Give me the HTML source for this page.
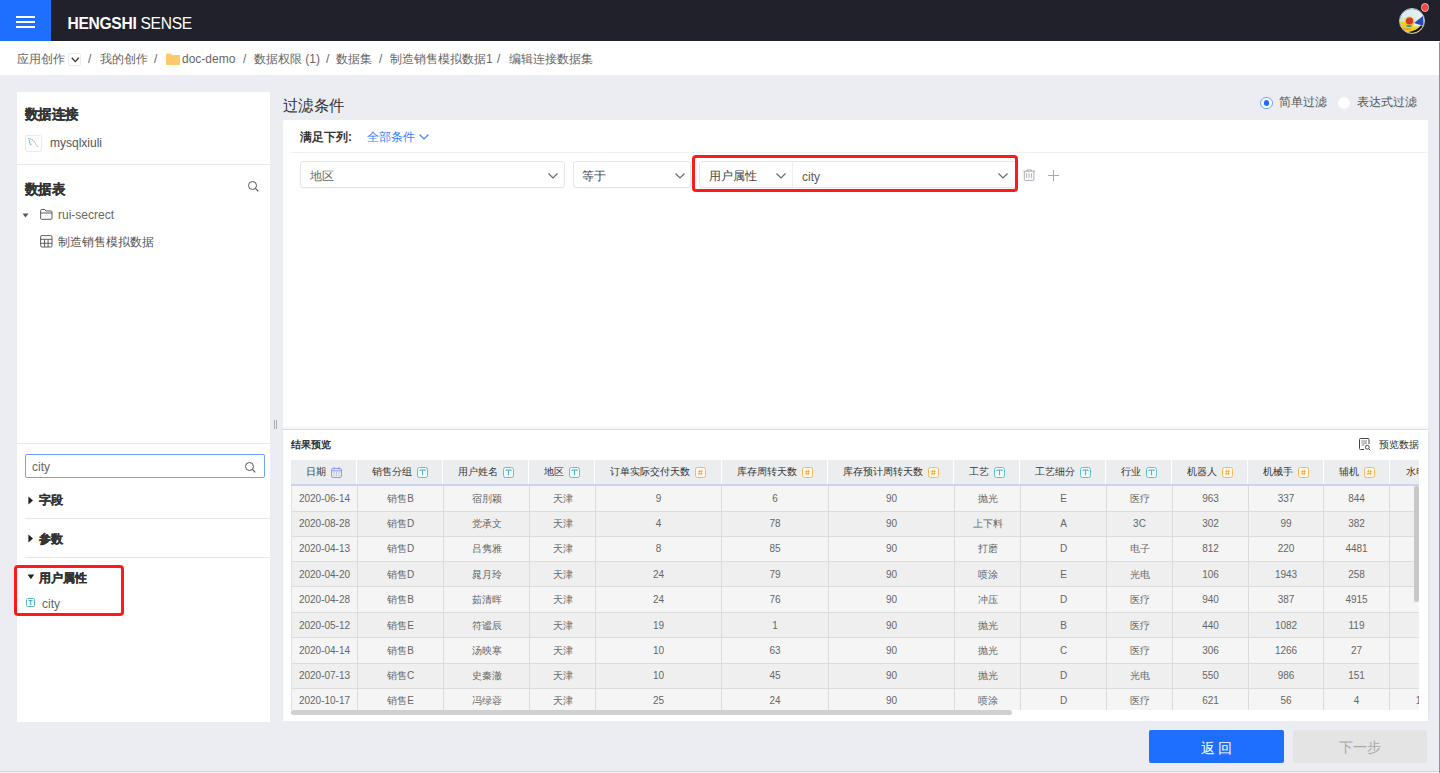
<!DOCTYPE html>
<html><head><meta charset="utf-8">
<style>
*{box-sizing:border-box;margin:0;padding:0}
html,body{width:1440px;height:773px;overflow:hidden}
body{font-family:"Liberation Sans",sans-serif;background:#ecedf2;position:relative;color:#333}
.abs{position:absolute}
.t{position:absolute;white-space:nowrap}
#top{left:0;top:0;width:1440px;height:41.5px;background:#20212b;box-shadow:0 1px 3px rgba(0,0,0,0.08)}
#menu{left:0;top:0;width:50.5px;height:41.5px;background:#1f6ffe}
#menu i{position:absolute;left:16px;width:19px;height:1.6px;background:#fff}
#logo{left:67.5px;top:14px;color:#fff;font-size:15.6px;line-height:20px;letter-spacing:-0.3px}
#crumb{left:0;top:41px;width:1440px;height:34px;background:#fff}
#crumb .t{top:10px;font-size:12px;line-height:16px;color:#666}
#left{left:17px;top:92px;width:253px;height:630px;background:#fff}
.h14{font-size:14px;line-height:18px;font-weight:bold;color:#333;transform:scaleX(0.96);transform-origin:0 0}
.bd{font-weight:bold;-webkit-text-stroke:0.25px currentColor}
.h14{-webkit-text-stroke:0.2px currentColor}
.f12{font-size:12px;line-height:16px}
.hr{position:absolute;height:1px;background:#e8e8e8}
#filter{left:283px;top:120px;width:1145px;height:310px;background:#fff;border-radius:2px}
#preview{left:283px;top:429px;width:1145px;height:292px;background:#fff;border-top:1px solid #dcdcdc;box-shadow:0 -2px 3px rgba(0,0,0,0.05)}
.sel{position:absolute;height:27px;border:1px solid #e6e6e6;border-radius:3px;background:#fff;box-shadow:0 1px 1px rgba(0,0,0,0.03)}
#grid{left:291px;top:460px;width:1128px;height:250px;overflow:hidden}
#ghead{left:0;top:0;width:1200px;height:26px;background:#ecedef;border-bottom:2px solid #c8d4f1}
.hc{position:absolute;top:0;height:24px;border-right:1px solid #fff;text-align:center;font-size:10px;line-height:24px;color:#333}
.hc span{vertical-align:middle}
.ti,.ni{display:inline-block;vertical-align:middle;width:11px;height:11px;border:1px solid #5bbcc6;border-radius:2px;color:#3aa8b3;font-size:8px;line-height:9px;text-align:center;margin-left:5px;font-weight:bold}
.ni{border-color:#f5b453;color:#f0a030}
.ci{vertical-align:middle;margin-left:5px;position:relative;top:0.5px}
#gbody{left:0;top:0;width:1200px;height:230px}
.row{position:absolute;left:0;width:1200px;border-bottom:1px solid #dcdcdc;border-left:1px solid #e2e2e2}
.r1{background:#f5f5f5}.r2{background:#efefef}
.bc{position:absolute;top:0;border-right:1px solid #dcdcdc;text-align:center;font-size:10px;line-height:24px;padding-top:1px;color:#666}
</style></head><body>
<div id="top" class="abs"></div>
<div id="menu" class="abs"><i style="top:16px"></i><i style="top:21px"></i><i style="top:26px"></i></div>
<div id="logo" class="abs"><b>HENGSHI</b> SENSE</div>
<!-- avatar -->
<div class="abs" style="left:1400px;top:8.5px;width:24px;height:24px;border-radius:50%;overflow:hidden">
<svg width="24" height="24" viewBox="1 1 24 24" style="display:block">
  <rect x="0" y="0" width="26" height="26" fill="#dcecf4"/>
  <path d="M0 8 Q6 9 9 13 L0 16 Z" fill="#cfe8c8"/>
  <path d="M14 3 L26 3 L26 16 L18 13 Z" fill="#e6eef8"/>
  <path d="M15 15 L24 8 L25 18 Z" fill="#2a48b8"/>
  <path d="M0 14 Q5 13 10 16 Q16 20 20 18 L26 17 L26 26 L0 26 Z" fill="#f2d21e"/>
  <path d="M2 20 Q8 22 12 21" fill="none" stroke="#f0a020" stroke-width="2"/>
  <path d="M10 25 Q18 24 23 18" fill="none" stroke="#151515" stroke-width="2.2"/>
  <circle cx="10.5" cy="13.5" r="5" fill="#f4c820"/>
  <circle cx="10.5" cy="13" r="3.6" fill="#d23a30"/>
  <ellipse cx="10" cy="18" rx="3" ry="1" fill="#20a0a0"/>
</svg></div>
<div class="abs" style="left:1399px;top:7.5px;width:26px;height:26px;border-radius:50%;border:1.2px solid #c8c8c8"></div>
<div class="abs" style="left:1421.5px;top:4.3px;width:6.6px;height:6.6px;border-radius:50%;background:#ff4040;box-shadow:0 0 0 0.7px #e0e0e0"></div>

<div id="crumb" class="abs">
 <div class="t" style="left:17px">应用创作</div>
 <div class="abs" style="left:68px;top:12px;width:13px;height:13px;border:1px solid #ececec;border-radius:2px"></div>
 <svg class="abs" style="left:70.5px;top:15.5px" width="9" height="6" viewBox="0 0 9 6"><path d="M0.8 0.8 L4.3 4.6 L7.8 0.8" fill="none" stroke="#333" stroke-width="1.3"/></svg>
 <div class="t" style="left:88px">/</div>
 <div class="t" style="left:100px">我的创作</div>
 <div class="t" style="left:154px">/</div>
 <svg class="abs" style="left:166px;top:12px" width="14" height="12" viewBox="0 0 14 12"><path d="M0 1.5 Q0 0.5 1 0.5 L5 0.5 L6.5 2 L13 2 Q14 2 14 3 L14 11 Q14 12 13 12 L1 12 Q0 12 0 11 Z" fill="#ffc96b"/></svg>
 <div class="t" style="left:182px">doc-demo</div>
 <div class="t" style="left:243px">/</div>
 <div class="t" style="left:254px">数据权限 (1)</div>
 <div class="t" style="left:326px">/</div>
 <div class="t" style="left:336px">数据集</div>
 <div class="t" style="left:379px">/</div>
 <div class="t" style="left:390px">制造销售模拟数据1</div>
 <div class="t" style="left:497px">/</div>
 <div class="t" style="left:509px">编辑连接数据集</div>
</div>

<div id="left" class="abs">
 <div class="t h14" style="left:8px;top:13px">数据连接</div>
 <div class="abs" style="left:8px;top:43px;width:17px;height:17px;border:1px solid #ebebeb;border-radius:2px"></div>
 <svg class="abs" style="left:10px;top:45px" width="13" height="13" viewBox="0 0 13 13"><path d="M1 1.6 Q5 1.4 7.5 5 Q9 7.5 11 10" fill="none" stroke="#5a9fb5" stroke-width="0.9" stroke-dasharray="1.5 0.6"/><path d="M2.2 2.6 L3.3 8 L4.6 7.3" fill="none" stroke="#6aaabb" stroke-width="0.8"/></svg>
 <div class="t f12" style="left:33px;top:43px;color:#555">mysqlxiuli</div>
 <div class="hr" style="left:0;top:72px;width:253px"></div>
 <div class="t h14" style="left:8px;top:88px">数据表</div>
 <svg class="abs" style="left:230px;top:88px" width="12" height="12" viewBox="0 0 12 12"><circle cx="5.5" cy="5.5" r="4" fill="none" stroke="#555" stroke-width="1"/><line x1="8.4" y1="8.4" x2="11.2" y2="11.4" stroke="#555" stroke-width="1.1"/></svg>
 <svg class="abs" style="left:5px;top:121px" width="7" height="5" viewBox="0 0 7 5"><path d="M0.5 0.5 L6.5 0.5 L3.5 4.5 Z" fill="#555"/></svg>
 <svg class="abs" style="left:23px;top:117px" width="13" height="11" viewBox="0 0 13 11"><path d="M1.8 0.5 H4.5 Q5 0.5 5.3 1 L5.8 2 H11 Q12 2 12 3 V9.3 Q12 10.3 11 10.3 H1.6 Q0.6 10.3 0.6 9.3 V1.7 Q0.6 0.5 1.8 0.5 Z M0.6 4 H12" fill="none" stroke="#555" stroke-width="0.95"/></svg>
 <div class="t f12" style="left:41px;top:115px;color:#666">rui-secrect</div>
 <svg class="abs" style="left:23px;top:143px" width="13" height="13" viewBox="0 0 13 13"><path d="M2 0.6 H10.7 Q12 0.6 12 2 V10.7 Q12 12 10.7 12 H2 Q0.6 12 0.6 10.7 V2 Q0.6 0.6 2 0.6 Z M0.6 4.3 H12 M0.6 8.3 H12 M4.6 4.3 V12 M8.1 4.3 V12" fill="none" stroke="#555" stroke-width="0.95"/></svg>
 <div class="t f12" style="left:41px;top:142px;color:#555">制造销售模拟数据</div>
 <div class="hr" style="left:0;top:351px;width:253px"></div>
 <div class="abs" style="left:8px;top:362px;width:240px;height:24px;border:1px solid #6ea2ff;border-radius:2px"></div>
 <div class="t f12" style="left:15px;top:367px;color:#666">city</div>
 <svg class="abs" style="left:227px;top:369px" width="12" height="12" viewBox="0 0 12 12"><circle cx="5.5" cy="5.5" r="4" fill="none" stroke="#555" stroke-width="1"/><line x1="8.4" y1="8.4" x2="11.2" y2="11.4" stroke="#555" stroke-width="1.1"/></svg>
 <svg class="abs" style="left:10.8px;top:403.5px" width="6" height="9" viewBox="0 0 6 9"><path d="M0.4 0.4 L5 4.5 L0.4 8.6 Z" fill="#222"/></svg>
 <div class="t f12 bd" style="left:22px;top:400px;color:#333">字段</div>
 <div class="hr" style="left:8px;top:426px;width:245px"></div>
 <svg class="abs" style="left:10.8px;top:442px" width="6" height="9" viewBox="0 0 6 9"><path d="M0.4 0.4 L5 4.5 L0.4 8.6 Z" fill="#222"/></svg>
 <div class="t f12 bd" style="left:22px;top:439px;color:#333">参数</div>
 <div class="hr" style="left:8px;top:465px;width:245px"></div>
 <svg class="abs" style="left:10px;top:482px" width="8" height="6" viewBox="0 0 8 6"><path d="M0.6 0.6 L7.2 0.6 L3.9 5.2 Z" fill="#222"/></svg>
 <div class="t f12 bd" style="left:22px;top:477.5px;color:#333">用户属性</div>
 <div class="abs" style="left:9px;top:506px;width:9px;height:9px;border:1px solid #5bbcc6;border-radius:1.5px;color:#3aa8b3;font-size:7px;line-height:7px;text-align:center;font-weight:bold">T</div>
 <div class="t f12" style="left:25px;top:503.5px;color:#666">city</div>
</div>
<!-- red box left -->
<div class="abs" style="left:14px;top:565px;width:110px;height:51px;border:3px solid #ff1a1a;border-radius:4px"></div>

<!-- splitter -->
<div class="abs" style="left:274px;top:420px;width:1px;height:9px;background:#aaa"></div>
<div class="abs" style="left:276px;top:420px;width:1px;height:9px;background:#aaa"></div>

<div class="t" style="left:283px;top:96px;font-size:16px;line-height:20px;color:#333;transform:scaleX(0.96);transform-origin:0 0">过滤条件</div>
<!-- radios -->
<div class="abs" style="left:1260.2px;top:96.7px;width:12.6px;height:12.6px;border-radius:50%;border:1px solid #6ea2ff;background:#fff"></div>
<div class="abs" style="left:1263.9px;top:100.4px;width:5.2px;height:5.2px;border-radius:50%;background:#1f6ffe"></div>
<div class="t f12" style="left:1279px;top:94.3px;color:#555">简单过滤</div>
<div class="abs" style="left:1338px;top:97px;width:12px;height:12px;border-radius:50%;background:#fff"></div>
<div class="t f12" style="left:1357px;top:94.3px;color:#555">表达式过滤</div>

<div id="filter" class="abs">
 <div class="t f12" style="left:17px;top:9px;font-weight:bold;color:#333">满足下列:</div>
 <div class="t f12" style="left:84px;top:9px;color:#3a80ff">全部条件</div>
 <svg class="abs" style="left:136px;top:14px" width="10" height="6" viewBox="0 0 10 6"><path d="M0.5 0.5 L5 5 L9.5 0.5" fill="none" stroke="#3a80ff" stroke-width="1.1"/></svg>
 <div class="hr" style="left:8px;top:32px;width:1136px;background:#f0f0f0"></div>
 <div class="sel" style="left:17px;top:41px;width:265px"></div>
 <div class="t f12" style="left:27px;top:48px;color:#666">地区</div>
 <svg class="abs" style="left:265px;top:53px" width="10" height="6" viewBox="0 0 10 6"><path d="M0.5 0.5 L5 5 L9.5 0.5" fill="none" stroke="#666" stroke-width="1.1"/></svg>
 <div class="sel" style="left:290px;top:41px;width:118px"></div>
 <div class="t f12" style="left:299px;top:48px;color:#444">等于</div>
 <svg class="abs" style="left:392px;top:53px" width="10" height="6" viewBox="0 0 10 6"><path d="M0.5 0.5 L5 5 L9.5 0.5" fill="none" stroke="#666" stroke-width="1.1"/></svg>
 <div class="sel" style="left:416px;top:41px;width:318px"></div>
 <div class="abs" style="left:509px;top:42px;width:1px;height:25px;background:#eee"></div>
 <div class="t f12" style="left:426px;top:48px;color:#444">用户属性</div>
 <svg class="abs" style="left:493px;top:53px" width="10" height="6" viewBox="0 0 10 6"><path d="M0.5 0.5 L5 5 L9.5 0.5" fill="none" stroke="#666" stroke-width="1.1"/></svg>
 <div class="t f12" style="left:519px;top:48.5px;color:#5a5a5a">city</div>
 <svg class="abs" style="left:715px;top:53px" width="10" height="6" viewBox="0 0 10 6"><path d="M0.5 0.5 L5 5 L9.5 0.5" fill="none" stroke="#666" stroke-width="1.1"/></svg>
 <svg class="abs" style="left:740px;top:49px" width="13" height="13" viewBox="0 0 13 13"><path d="M0.4 2.2 H11.9 M3.3 2.2 L3.9 0.9 H8.3 L8.9 2.2 M1.3 2.2 V10.4 Q1.3 11.4 2.3 11.4 H9.9 Q10.9 11.4 10.9 10.4 V2.2 M3.6 4.2 V8.8 M6.1 4.2 V8.8 M8.6 4.2 V8.8" fill="none" stroke="#ababb5" stroke-width="1"/></svg>
 <svg class="abs" style="left:765px;top:50px" width="11" height="11" viewBox="0 0 11 11"><path d="M5.5 0 V11 M0 5.5 H11" stroke="#a8a8b0" stroke-width="1"/></svg>
</div>
<!-- red box filter -->
<div class="abs" style="left:692px;top:155px;width:326px;height:37px;border:3px solid #ff1a1a;border-radius:4px"></div>

<div id="preview" class="abs">
 <div class="t" style="left:8px;top:8px;font-size:10px;line-height:14px;font-weight:bold;color:#333">结果预览</div>
 <svg class="abs" style="left:1076px;top:8px" width="12" height="13" viewBox="0 0 12 13"><path d="M10 6 V1.5 Q10 0.5 9 0.5 H1.5 Q0.5 0.5 0.5 1.5 V10.5 Q0.5 11.5 1.5 11.5 H5" fill="none" stroke="#444" stroke-width="1"/><path d="M2.5 3 H8 M2.5 5 H8 M2.5 7 H5.5" stroke="#777" stroke-width="0.9"/><circle cx="8.3" cy="9.3" r="1.9" fill="none" stroke="#444" stroke-width="1"/><line x1="9.7" y1="10.7" x2="11.3" y2="12.3" stroke="#444"/></svg>
 <div class="t" style="left:1096px;top:8px;font-size:10px;line-height:14px;color:#333">预览数据</div>
</div>

<div id="grid" class="abs">
 <div id="ghead" class="abs"><div class="hc" style="left:1px;width:65px"><span>日期</span><svg class="ci" width="11" height="11" viewBox="0 0 11 11"><rect x="0.5" y="1.5" width="10" height="9" rx="1.5" fill="none" stroke="#8a9bf2" stroke-width="1"/><line x1="0.5" y1="3.8" x2="10.5" y2="3.8" stroke="#8a9bf2"/><line x1="3" y1="0" x2="3" y2="2.5" stroke="#8a9bf2"/><line x1="8" y1="0" x2="8" y2="2.5" stroke="#8a9bf2"/><g fill="#8a9bf2"><rect x="2.5" y="5.5" width="1" height="1"/><rect x="5" y="5.5" width="1" height="1"/><rect x="7.5" y="5.5" width="1" height="1"/><rect x="2.5" y="7.8" width="1" height="1"/><rect x="5" y="7.8" width="1" height="1"/><rect x="7.5" y="7.8" width="1" height="1"/></g></svg></div><div class="hc" style="left:66px;width:86px"><span>销售分组</span><svg class="ci" width="11" height="11" viewBox="0 0 11 11"><rect x="0.5" y="0.5" width="10" height="10" rx="2" fill="#f3fbfb" stroke="#62c1c9" stroke-width="1"/><path d="M3 3 H8 V4 M3 3 V4 M5.5 3 V8.3" fill="none" stroke="#4fb5be" stroke-width="1.1"/></svg></div><div class="hc" style="left:152px;width:86px"><span>用户姓名</span><svg class="ci" width="11" height="11" viewBox="0 0 11 11"><rect x="0.5" y="0.5" width="10" height="10" rx="2" fill="#f3fbfb" stroke="#62c1c9" stroke-width="1"/><path d="M3 3 H8 V4 M3 3 V4 M5.5 3 V8.3" fill="none" stroke="#4fb5be" stroke-width="1.1"/></svg></div><div class="hc" style="left:238px;width:66px"><span>地区</span><svg class="ci" width="11" height="11" viewBox="0 0 11 11"><rect x="0.5" y="0.5" width="10" height="10" rx="2" fill="#f3fbfb" stroke="#62c1c9" stroke-width="1"/><path d="M3 3 H8 V4 M3 3 V4 M5.5 3 V8.3" fill="none" stroke="#4fb5be" stroke-width="1.1"/></svg></div><div class="hc" style="left:304px;width:127px"><span>订单实际交付天数</span><svg class="ci" width="11" height="11" viewBox="0 0 11 11"><rect x="0.5" y="0.5" width="10" height="10" rx="2" fill="#fff8ec" stroke="#f5b860" stroke-width="1"/><path d="M4.6 2.8 L3.9 8.2 M6.8 2.8 L6.1 8.2 M3.2 4.4 H7.8 M3 6.6 H7.6" fill="none" stroke="#f0a838" stroke-width="0.8"/></svg></div><div class="hc" style="left:431px;width:106px"><span>库存周转天数</span><svg class="ci" width="11" height="11" viewBox="0 0 11 11"><rect x="0.5" y="0.5" width="10" height="10" rx="2" fill="#fff8ec" stroke="#f5b860" stroke-width="1"/><path d="M4.6 2.8 L3.9 8.2 M6.8 2.8 L6.1 8.2 M3.2 4.4 H7.8 M3 6.6 H7.6" fill="none" stroke="#f0a838" stroke-width="0.8"/></svg></div><div class="hc" style="left:537px;width:126px"><span>库存预计周转天数</span><svg class="ci" width="11" height="11" viewBox="0 0 11 11"><rect x="0.5" y="0.5" width="10" height="10" rx="2" fill="#fff8ec" stroke="#f5b860" stroke-width="1"/><path d="M4.6 2.8 L3.9 8.2 M6.8 2.8 L6.1 8.2 M3.2 4.4 H7.8 M3 6.6 H7.6" fill="none" stroke="#f0a838" stroke-width="0.8"/></svg></div><div class="hc" style="left:663px;width:66px"><span>工艺</span><svg class="ci" width="11" height="11" viewBox="0 0 11 11"><rect x="0.5" y="0.5" width="10" height="10" rx="2" fill="#f3fbfb" stroke="#62c1c9" stroke-width="1"/><path d="M3 3 H8 V4 M3 3 V4 M5.5 3 V8.3" fill="none" stroke="#4fb5be" stroke-width="1.1"/></svg></div><div class="hc" style="left:729px;width:86px"><span>工艺细分</span><svg class="ci" width="11" height="11" viewBox="0 0 11 11"><rect x="0.5" y="0.5" width="10" height="10" rx="2" fill="#f3fbfb" stroke="#62c1c9" stroke-width="1"/><path d="M3 3 H8 V4 M3 3 V4 M5.5 3 V8.3" fill="none" stroke="#4fb5be" stroke-width="1.1"/></svg></div><div class="hc" style="left:815px;width:66px"><span>行业</span><svg class="ci" width="11" height="11" viewBox="0 0 11 11"><rect x="0.5" y="0.5" width="10" height="10" rx="2" fill="#f3fbfb" stroke="#62c1c9" stroke-width="1"/><path d="M3 3 H8 V4 M3 3 V4 M5.5 3 V8.3" fill="none" stroke="#4fb5be" stroke-width="1.1"/></svg></div><div class="hc" style="left:881px;width:76px"><span>机器人</span><svg class="ci" width="11" height="11" viewBox="0 0 11 11"><rect x="0.5" y="0.5" width="10" height="10" rx="2" fill="#fff8ec" stroke="#f5b860" stroke-width="1"/><path d="M4.6 2.8 L3.9 8.2 M6.8 2.8 L6.1 8.2 M3.2 4.4 H7.8 M3 6.6 H7.6" fill="none" stroke="#f0a838" stroke-width="0.8"/></svg></div><div class="hc" style="left:957px;width:76px"><span>机械手</span><svg class="ci" width="11" height="11" viewBox="0 0 11 11"><rect x="0.5" y="0.5" width="10" height="10" rx="2" fill="#fff8ec" stroke="#f5b860" stroke-width="1"/><path d="M4.6 2.8 L3.9 8.2 M6.8 2.8 L6.1 8.2 M3.2 4.4 H7.8 M3 6.6 H7.6" fill="none" stroke="#f0a838" stroke-width="0.8"/></svg></div><div class="hc" style="left:1033px;width:66px"><span>辅机</span><svg class="ci" width="11" height="11" viewBox="0 0 11 11"><rect x="0.5" y="0.5" width="10" height="10" rx="2" fill="#fff8ec" stroke="#f5b860" stroke-width="1"/><path d="M4.6 2.8 L3.9 8.2 M6.8 2.8 L6.1 8.2 M3.2 4.4 H7.8 M3 6.6 H7.6" fill="none" stroke="#f0a838" stroke-width="0.8"/></svg></div><div class="hc" style="left:1099px;width:69px"><span>水电</span><svg class="ci" width="11" height="11" viewBox="0 0 11 11"><rect x="0.5" y="0.5" width="10" height="10" rx="2" fill="#fff8ec" stroke="#f5b860" stroke-width="1"/><path d="M4.6 2.8 L3.9 8.2 M6.8 2.8 L6.1 8.2 M3.2 4.4 H7.8 M3 6.6 H7.6" fill="none" stroke="#f0a838" stroke-width="0.8"/></svg></div></div>
 <div id="gbody" class="abs"><div class="row r1" style="top:26px;height:26px"><div class="bc" style="left:0px;width:66px;height:25px;padding-top:1px">2020-06-14</div><div class="bc" style="left:66px;width:86px;height:25px;padding-top:1px">销售B</div><div class="bc" style="left:152px;width:86px;height:25px;padding-top:1px">宿刖颖</div><div class="bc" style="left:238px;width:66px;height:25px;padding-top:1px">天津</div><div class="bc" style="left:304px;width:126px;height:25px;padding-top:1px">9</div><div class="bc" style="left:430px;width:107px;height:25px;padding-top:1px">6</div><div class="bc" style="left:537px;width:126px;height:25px;padding-top:1px">90</div><div class="bc" style="left:663px;width:66px;height:25px;padding-top:1px">抛光</div><div class="bc" style="left:729px;width:86px;height:25px;padding-top:1px">E</div><div class="bc" style="left:815px;width:66px;height:25px;padding-top:1px">医疗</div><div class="bc" style="left:881px;width:76px;height:25px;padding-top:1px">963</div><div class="bc" style="left:957px;width:75px;height:25px;padding-top:1px">337</div><div class="bc" style="left:1032px;width:66px;height:25px;padding-top:1px">844</div><div class="bc" style="left:1098px;width:69px;height:25px;padding-top:1px"></div></div><div class="row r2" style="top:52px;height:25px"><div class="bc" style="left:0px;width:66px;height:24px;padding-top:0px">2020-08-28</div><div class="bc" style="left:66px;width:86px;height:24px;padding-top:0px">销售D</div><div class="bc" style="left:152px;width:86px;height:24px;padding-top:0px">党承文</div><div class="bc" style="left:238px;width:66px;height:24px;padding-top:0px">天津</div><div class="bc" style="left:304px;width:126px;height:24px;padding-top:0px">4</div><div class="bc" style="left:430px;width:107px;height:24px;padding-top:0px">78</div><div class="bc" style="left:537px;width:126px;height:24px;padding-top:0px">90</div><div class="bc" style="left:663px;width:66px;height:24px;padding-top:0px">上下料</div><div class="bc" style="left:729px;width:86px;height:24px;padding-top:0px">A</div><div class="bc" style="left:815px;width:66px;height:24px;padding-top:0px">3C</div><div class="bc" style="left:881px;width:76px;height:24px;padding-top:0px">302</div><div class="bc" style="left:957px;width:75px;height:24px;padding-top:0px">99</div><div class="bc" style="left:1032px;width:66px;height:24px;padding-top:0px">382</div><div class="bc" style="left:1098px;width:69px;height:24px;padding-top:0px"></div></div><div class="row r1" style="top:77px;height:25px"><div class="bc" style="left:0px;width:66px;height:24px;padding-top:0px">2020-04-13</div><div class="bc" style="left:66px;width:86px;height:24px;padding-top:0px">销售D</div><div class="bc" style="left:152px;width:86px;height:24px;padding-top:0px">吕隽雅</div><div class="bc" style="left:238px;width:66px;height:24px;padding-top:0px">天津</div><div class="bc" style="left:304px;width:126px;height:24px;padding-top:0px">8</div><div class="bc" style="left:430px;width:107px;height:24px;padding-top:0px">85</div><div class="bc" style="left:537px;width:126px;height:24px;padding-top:0px">90</div><div class="bc" style="left:663px;width:66px;height:24px;padding-top:0px">打磨</div><div class="bc" style="left:729px;width:86px;height:24px;padding-top:0px">D</div><div class="bc" style="left:815px;width:66px;height:24px;padding-top:0px">电子</div><div class="bc" style="left:881px;width:76px;height:24px;padding-top:0px">812</div><div class="bc" style="left:957px;width:75px;height:24px;padding-top:0px">220</div><div class="bc" style="left:1032px;width:66px;height:24px;padding-top:0px">4481</div><div class="bc" style="left:1098px;width:69px;height:24px;padding-top:0px"></div></div><div class="row r2" style="top:102px;height:25px"><div class="bc" style="left:0px;width:66px;height:24px;padding-top:1px">2020-04-20</div><div class="bc" style="left:66px;width:86px;height:24px;padding-top:1px">销售D</div><div class="bc" style="left:152px;width:86px;height:24px;padding-top:1px">晁月玲</div><div class="bc" style="left:238px;width:66px;height:24px;padding-top:1px">天津</div><div class="bc" style="left:304px;width:126px;height:24px;padding-top:1px">24</div><div class="bc" style="left:430px;width:107px;height:24px;padding-top:1px">79</div><div class="bc" style="left:537px;width:126px;height:24px;padding-top:1px">90</div><div class="bc" style="left:663px;width:66px;height:24px;padding-top:1px">喷涂</div><div class="bc" style="left:729px;width:86px;height:24px;padding-top:1px">E</div><div class="bc" style="left:815px;width:66px;height:24px;padding-top:1px">光电</div><div class="bc" style="left:881px;width:76px;height:24px;padding-top:1px">106</div><div class="bc" style="left:957px;width:75px;height:24px;padding-top:1px">1943</div><div class="bc" style="left:1032px;width:66px;height:24px;padding-top:1px">258</div><div class="bc" style="left:1098px;width:69px;height:24px;padding-top:1px"></div></div><div class="row r1" style="top:127px;height:26px"><div class="bc" style="left:0px;width:66px;height:25px;padding-top:1px">2020-04-28</div><div class="bc" style="left:66px;width:86px;height:25px;padding-top:1px">销售B</div><div class="bc" style="left:152px;width:86px;height:25px;padding-top:1px">茹清晖</div><div class="bc" style="left:238px;width:66px;height:25px;padding-top:1px">天津</div><div class="bc" style="left:304px;width:126px;height:25px;padding-top:1px">24</div><div class="bc" style="left:430px;width:107px;height:25px;padding-top:1px">76</div><div class="bc" style="left:537px;width:126px;height:25px;padding-top:1px">90</div><div class="bc" style="left:663px;width:66px;height:25px;padding-top:1px">冲压</div><div class="bc" style="left:729px;width:86px;height:25px;padding-top:1px">D</div><div class="bc" style="left:815px;width:66px;height:25px;padding-top:1px">医疗</div><div class="bc" style="left:881px;width:76px;height:25px;padding-top:1px">940</div><div class="bc" style="left:957px;width:75px;height:25px;padding-top:1px">387</div><div class="bc" style="left:1032px;width:66px;height:25px;padding-top:1px">4915</div><div class="bc" style="left:1098px;width:69px;height:25px;padding-top:1px"></div></div><div class="row r2" style="top:153px;height:25px"><div class="bc" style="left:0px;width:66px;height:24px;padding-top:1px">2020-05-12</div><div class="bc" style="left:66px;width:86px;height:24px;padding-top:1px">销售E</div><div class="bc" style="left:152px;width:86px;height:24px;padding-top:1px">符谧辰</div><div class="bc" style="left:238px;width:66px;height:24px;padding-top:1px">天津</div><div class="bc" style="left:304px;width:126px;height:24px;padding-top:1px">19</div><div class="bc" style="left:430px;width:107px;height:24px;padding-top:1px">1</div><div class="bc" style="left:537px;width:126px;height:24px;padding-top:1px">90</div><div class="bc" style="left:663px;width:66px;height:24px;padding-top:1px">抛光</div><div class="bc" style="left:729px;width:86px;height:24px;padding-top:1px">B</div><div class="bc" style="left:815px;width:66px;height:24px;padding-top:1px">医疗</div><div class="bc" style="left:881px;width:76px;height:24px;padding-top:1px">440</div><div class="bc" style="left:957px;width:75px;height:24px;padding-top:1px">1082</div><div class="bc" style="left:1032px;width:66px;height:24px;padding-top:1px">119</div><div class="bc" style="left:1098px;width:69px;height:24px;padding-top:1px"></div></div><div class="row r1" style="top:178px;height:26px"><div class="bc" style="left:0px;width:66px;height:25px;padding-top:1px">2020-04-14</div><div class="bc" style="left:66px;width:86px;height:25px;padding-top:1px">销售B</div><div class="bc" style="left:152px;width:86px;height:25px;padding-top:1px">汤映寒</div><div class="bc" style="left:238px;width:66px;height:25px;padding-top:1px">天津</div><div class="bc" style="left:304px;width:126px;height:25px;padding-top:1px">10</div><div class="bc" style="left:430px;width:107px;height:25px;padding-top:1px">63</div><div class="bc" style="left:537px;width:126px;height:25px;padding-top:1px">90</div><div class="bc" style="left:663px;width:66px;height:25px;padding-top:1px">抛光</div><div class="bc" style="left:729px;width:86px;height:25px;padding-top:1px">C</div><div class="bc" style="left:815px;width:66px;height:25px;padding-top:1px">医疗</div><div class="bc" style="left:881px;width:76px;height:25px;padding-top:1px">306</div><div class="bc" style="left:957px;width:75px;height:25px;padding-top:1px">1266</div><div class="bc" style="left:1032px;width:66px;height:25px;padding-top:1px">27</div><div class="bc" style="left:1098px;width:69px;height:25px;padding-top:1px"></div></div><div class="row r2" style="top:204px;height:25px"><div class="bc" style="left:0px;width:66px;height:24px;padding-top:0px">2020-07-13</div><div class="bc" style="left:66px;width:86px;height:24px;padding-top:0px">销售C</div><div class="bc" style="left:152px;width:86px;height:24px;padding-top:0px">史秦澈</div><div class="bc" style="left:238px;width:66px;height:24px;padding-top:0px">天津</div><div class="bc" style="left:304px;width:126px;height:24px;padding-top:0px">10</div><div class="bc" style="left:430px;width:107px;height:24px;padding-top:0px">45</div><div class="bc" style="left:537px;width:126px;height:24px;padding-top:0px">90</div><div class="bc" style="left:663px;width:66px;height:24px;padding-top:0px">抛光</div><div class="bc" style="left:729px;width:86px;height:24px;padding-top:0px">D</div><div class="bc" style="left:815px;width:66px;height:24px;padding-top:0px">光电</div><div class="bc" style="left:881px;width:76px;height:24px;padding-top:0px">550</div><div class="bc" style="left:957px;width:75px;height:24px;padding-top:0px">986</div><div class="bc" style="left:1032px;width:66px;height:24px;padding-top:0px">151</div><div class="bc" style="left:1098px;width:69px;height:24px;padding-top:0px"></div></div><div class="row r1" style="top:229px;height:25px"><div class="bc" style="left:0px;width:66px;height:24px;padding-top:0px">2020-10-17</div><div class="bc" style="left:66px;width:86px;height:24px;padding-top:0px">销售E</div><div class="bc" style="left:152px;width:86px;height:24px;padding-top:0px">冯绿蓉</div><div class="bc" style="left:238px;width:66px;height:24px;padding-top:0px">天津</div><div class="bc" style="left:304px;width:126px;height:24px;padding-top:0px">25</div><div class="bc" style="left:430px;width:107px;height:24px;padding-top:0px">24</div><div class="bc" style="left:537px;width:126px;height:24px;padding-top:0px">90</div><div class="bc" style="left:663px;width:66px;height:24px;padding-top:0px">喷涂</div><div class="bc" style="left:729px;width:86px;height:24px;padding-top:0px">D</div><div class="bc" style="left:815px;width:66px;height:24px;padding-top:0px">医疗</div><div class="bc" style="left:881px;width:76px;height:24px;padding-top:0px">621</div><div class="bc" style="left:957px;width:75px;height:24px;padding-top:0px">56</div><div class="bc" style="left:1032px;width:66px;height:24px;padding-top:0px">4</div><div class="bc" style="left:1098px;width:69px;height:24px;padding-top:0px">129</div></div></div>
 <div class="abs" style="left:1123px;top:26px;width:5px;height:116px;background:#c8c8c8;border-radius:2px"></div>
</div>
<div class="abs" style="left:291px;top:710px;width:721px;height:5px;background:#d0d0d0;border-radius:3px"></div>

<div class="abs" style="left:1149px;top:730px;width:135px;height:33px;background:#1f6ffe;border-radius:2px;color:#fff;font-size:14px;line-height:36px;text-align:center;letter-spacing:3.5px;text-indent:3.5px">返回</div>
<div class="abs" style="left:1293px;top:730px;width:134px;height:33px;background:#e4e4e4;border-radius:2px;color:#a8a8a8;font-size:14px;line-height:35px;text-align:center">下一步</div>
<div class="abs" style="left:0;top:771px;width:1440px;height:1px;background:#d6d0d8"></div><div class="abs" style="left:0;top:772px;width:1440px;height:1px;background:#fafafa"></div>
<div class="abs" style="left:1439px;top:42px;width:1px;height:731px;background:#8a9690"></div>
</body></html>
